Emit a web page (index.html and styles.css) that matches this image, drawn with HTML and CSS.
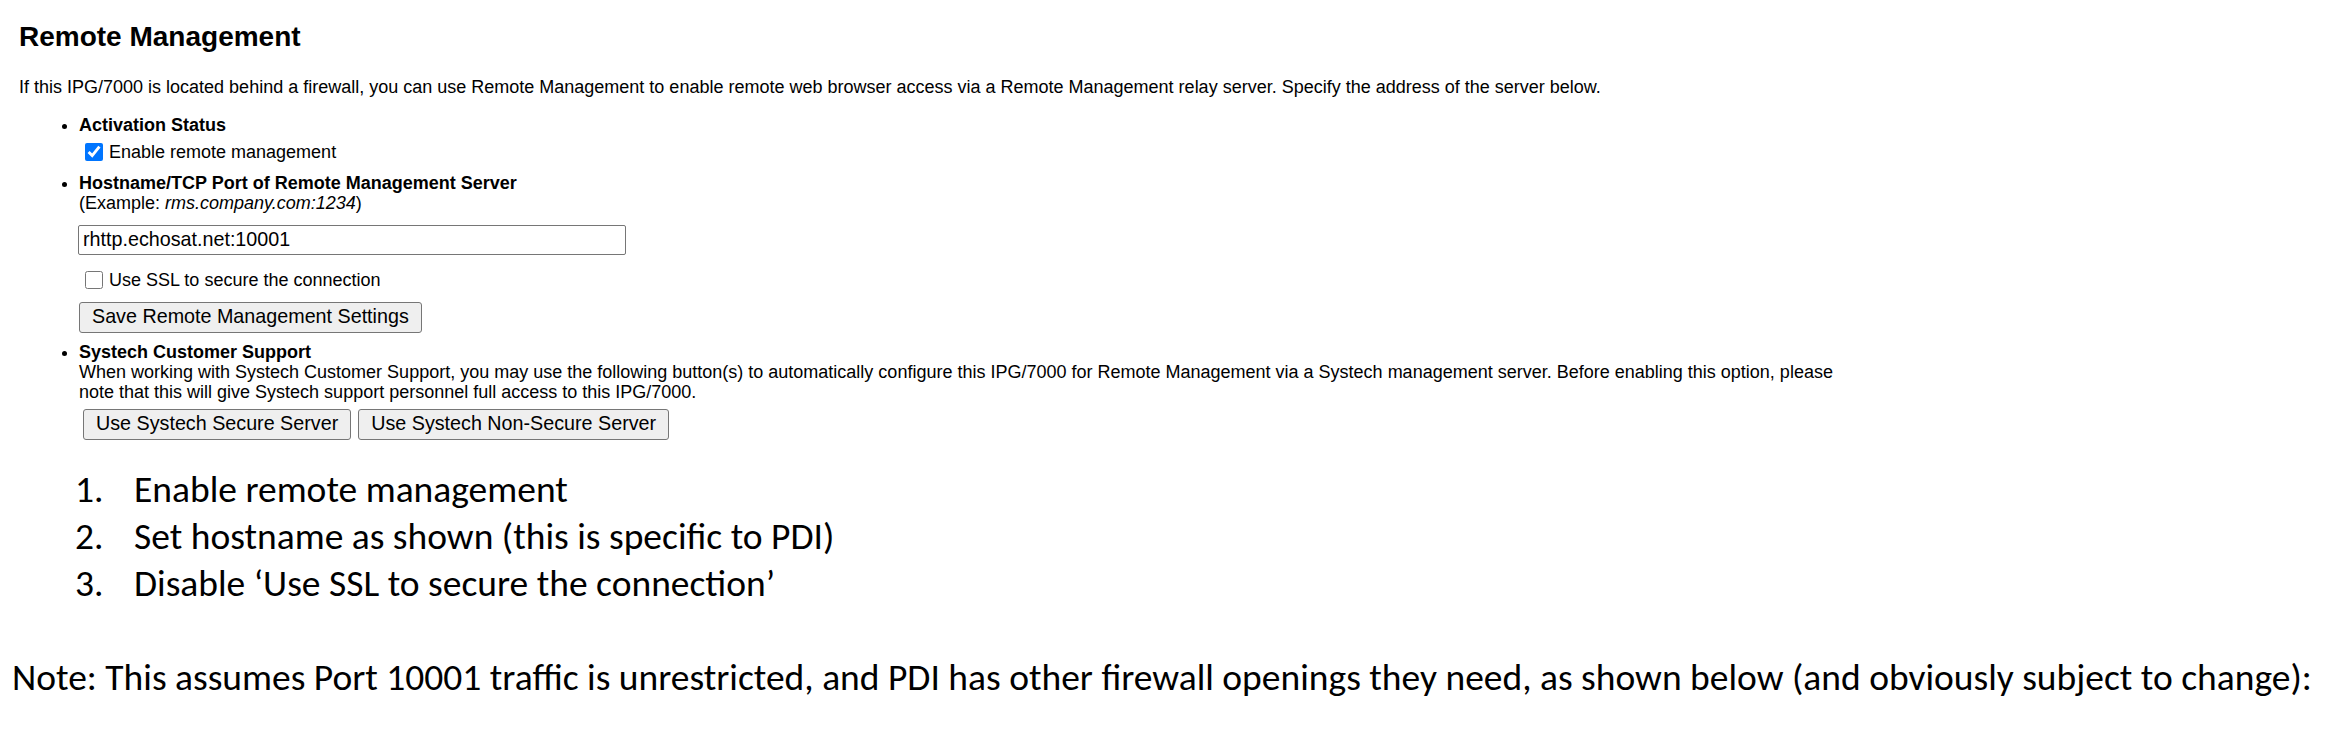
FILE: index.html
```html
<!DOCTYPE html>
<html lang="en">
<head>
<meta charset="utf-8">
<title>Remote Management</title>
<link rel="stylesheet" href="styles.css">
</head>
<body>
<div class="web">
  <h1 class="web-title">Remote Management</h1>
  <p class="web-intro">If this IPG/7000 is located behind a firewall, you can use Remote Management to enable remote web browser access via a Remote Management relay server. Specify the address of the server below.</p>
  <ul class="opts">
    <li class="opt opt-1">
      <div class="opt-label">Activation Status</div>
      <label class="chk-row"><input class="chk" type="checkbox" checked>Enable remote management</label>
    </li>
    <li class="opt opt-2">
      <div class="opt-label">Hostname/TCP Port of Remote Management Server</div>
      <div class="opt-text">(Example: <i>rms.company.com:1234</i>)</div>
      <input class="field" type="text" value="rhttp.echosat.net:10001">
      <label class="chk-row chk-row-ssl"><input class="chk" type="checkbox">Use SSL to secure the connection</label>
      <div class="btn-row btn-row-save"><button class="btn" type="button">Save Remote Management Settings</button></div>
    </li>
    <li class="opt opt-3">
      <div class="opt-label">Systech Customer Support</div>
      <div class="opt-text">When working with Systech Customer Support, you may use the following button(s) to automatically configure this IPG/7000 for Remote Management via a Systech management server. Before enabling this option, please</div>
      <div class="opt-text">note that this will give Systech support personnel full access to this IPG/7000.</div>
      <div class="btn-row btn-row-pair">
        <button class="btn" type="button">Use Systech Secure Server</button>
        <button class="btn" type="button">Use Systech Non-Secure Server</button>
      </div>
    </li>
  </ul>
</div>
<ol class="steps">
  <li class="step">Enable remote management</li>
  <li class="step">Set hostname as shown (this is specific to PDI)</li>
  <li class="step">Disable ‘Use SSL to secure the connection’</li>
</ol>
<p class="note">Note: This assumes Port 10001 traffic is unrestricted, and PDI has other firewall openings they need, as shown below (and obviously subject to change):</p>
</body>
</html>
```
FILE: styles.css
```css
* { box-sizing: border-box; }
html, body { margin: 0; padding: 0; background: #ffffff; color: #000000; }
body { width: 2341px; height: 741px; overflow: hidden; }

.web {
  padding-left: 19px;
  font-family: "Liberation Sans", Arial, sans-serif;
  font-size: 18px;
  line-height: 20.4px;
}
.web-title {
  margin: 21px 0 0;
  font-size: 28px;
  line-height: 32px;
  font-weight: bold;
}
.web-intro {
  margin: 24px 0 0;
  white-space: nowrap;
}
.opts {
  margin: 18px 0 0;
  padding-left: 60px;
  list-style: disc;
}
.opt { white-space: nowrap; }
.opt-2 { margin-top: 10.6px; }
.opt-3 { margin-top: 9px; }
.opt-label { font-weight: bold; }
.chk-row {
  display: flex;
  align-items: center;
  height: 20.4px;
  margin-top: 6px;
}
.chk-row-ssl { margin-top: 15px; }
.chk {
  width: 18px;
  height: 18px;
  margin: 0 6px 0 6px;
  flex: none;
}
.field {
  display: block;
  width: 548px;
  height: 30px;
  margin: 11px 0 0 -1px;
  padding: 0 4px;
  border: 1px solid #767676;
  border-radius: 2px;
  font-family: "Liberation Sans", Arial, sans-serif;
  font-size: 19.73px;
  color: #000000;
  background: #ffffff;
}
.btn-row { display: flex; gap: 7px; }
.btn-row-save { margin-top: 11.6px; }
.btn-row-pair { margin-top: 6px; padding-left: 4px; }
.btn {
  height: 31px;
  padding: 0 12px;
  border: 1px solid #767676;
  border-radius: 3px;
  background: #efefef;
  color: #000000;
  font-family: "Liberation Sans", Arial, sans-serif;
  font-size: 19.73px;
  line-height: 1;
}

.steps {
  margin: 26px 0 0;
  padding-left: 75px;
  list-style: none;
  counter-reset: step;
  font-family: Carlito, Calibri, "Liberation Sans", sans-serif;
  font-size: 37.5px;
  line-height: 47px;
}
.step { counter-increment: step; white-space: nowrap; }
.step::before {
  content: counter(step) ".";
  display: inline-block;
  width: 59px;
}
.note {
  margin: 47px 0 0;
  padding-left: 12px;
  font-family: Carlito, Calibri, "Liberation Sans", sans-serif;
  font-size: 37.5px;
  line-height: 47px;
  white-space: nowrap;
}
```
